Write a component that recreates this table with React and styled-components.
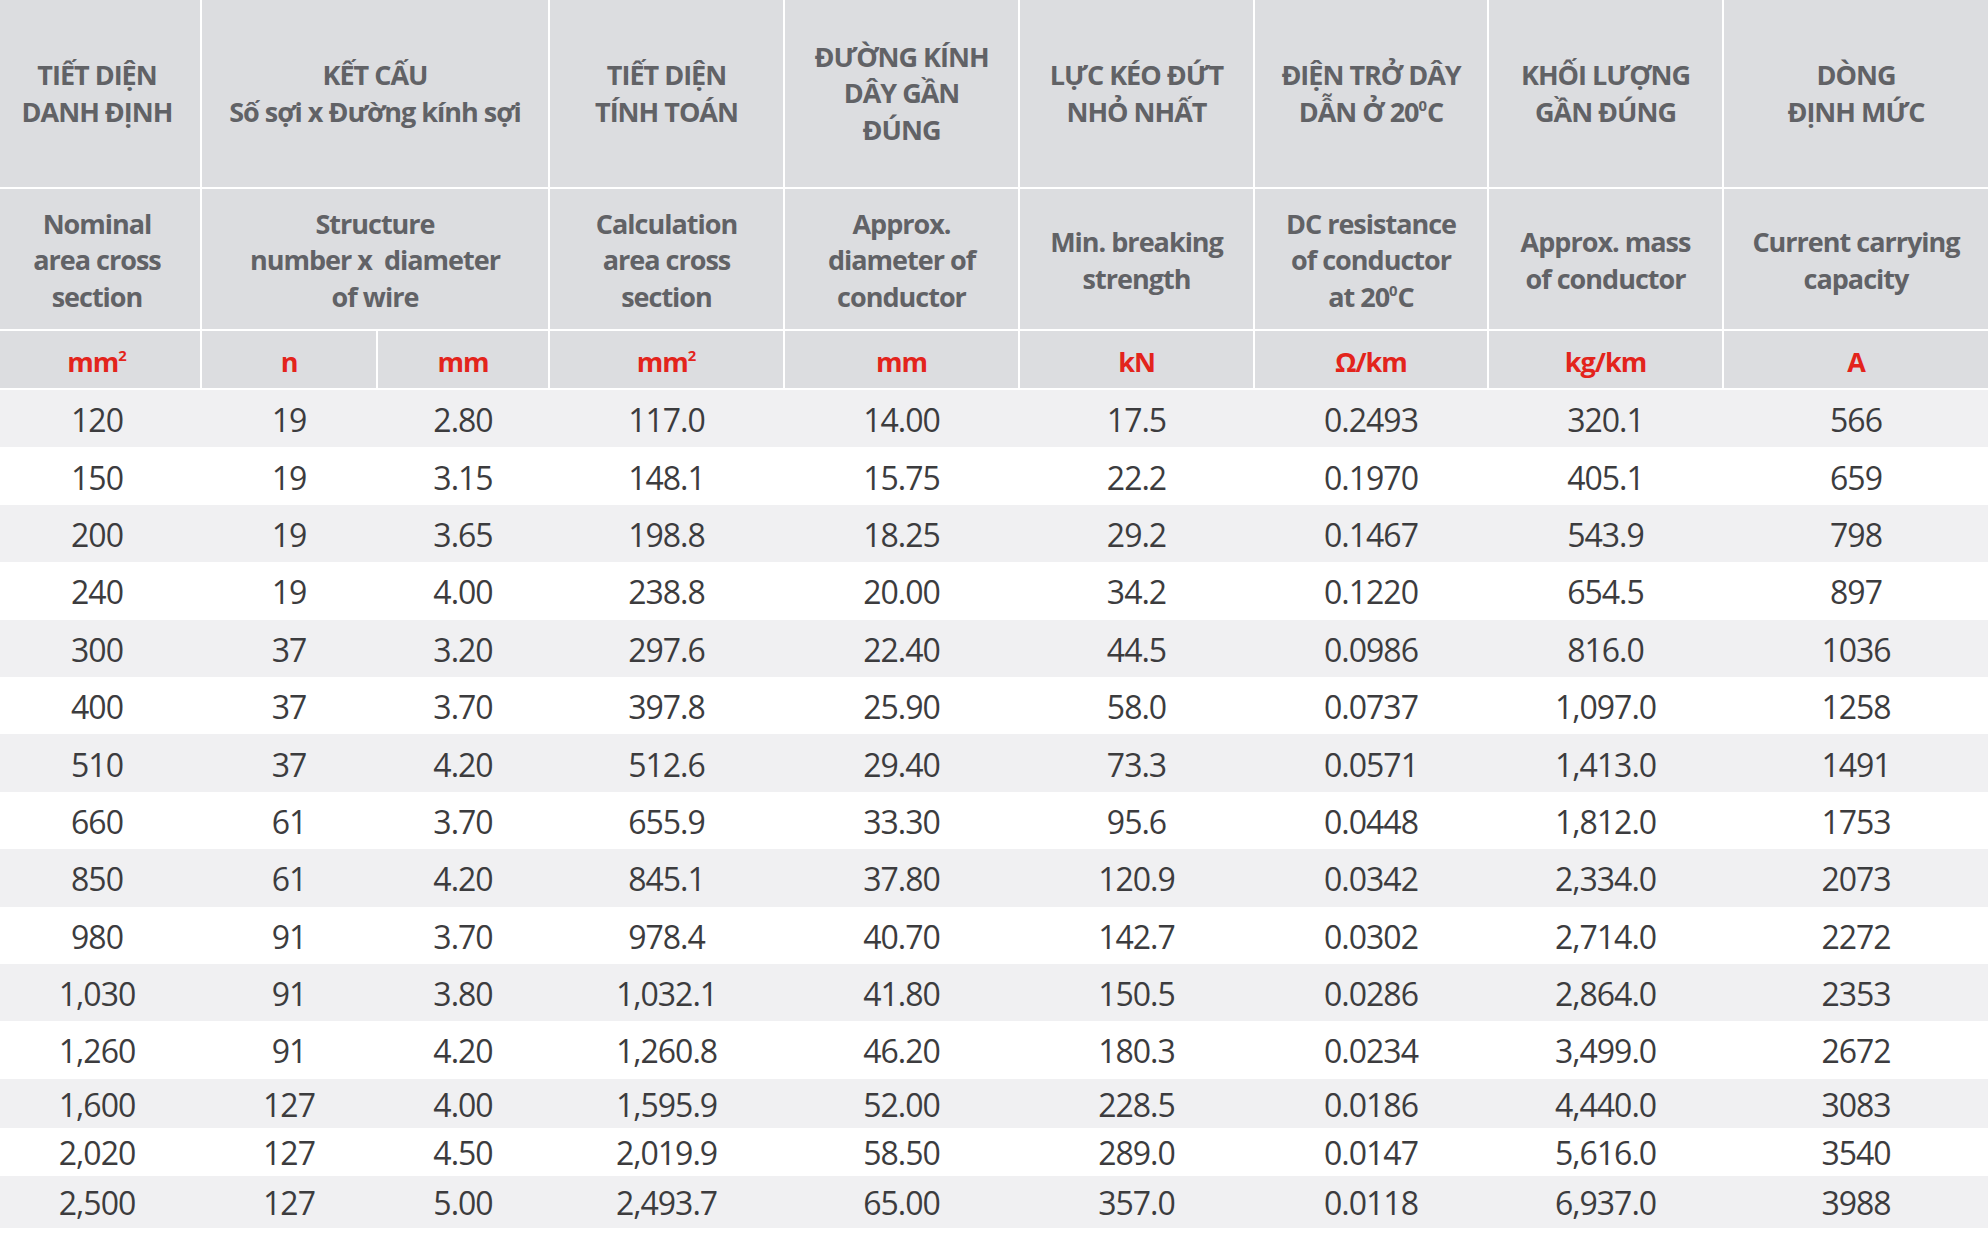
import React from "react";
import styled, { createGlobalStyle } from "styled-components";

const GlobalStyle = createGlobalStyle`
  html, body {
    margin: 0;
    padding: 0;
    background: #ffffff;
  }
  body {
    font-family: "Open Sans", "Noto Sans", sans-serif;
  }
`;

const COLS = "200px 174px 170px 233px 233px 233px 232px 233px 264px";

const Table = styled.div`
  width: 1988px;
  background: #ffffff;
`;

const Head = styled.div`
  display: grid;
  grid-template-columns: ${COLS};
  grid-template-rows: 187px 140px 57px;
  gap: 2px;
  padding-bottom: 2px;
  background: #ffffff;
`;

const HeadCell = styled.div`
  grid-column: ${(p) => p.$col};
  grid-row: ${(p) => p.$row};
  background: #dcdde0;
  display: flex;
  align-items: center;
  justify-content: center;
  text-align: center;
  font-weight: 700;
  font-size: 27px;
  line-height: 36.5px;
  letter-spacing: -1px;
  white-space: pre;
  color: ${(p) => (p.$unit ? "#e3241c" : "#616266")};
  padding-top: ${(p) => p.$top || 0}px;
  padding-right: ${(p) => (p.$first ? 6 : 0)}px;
`;

const Sup = styled.sup`
  font-size: 0.55em;
  line-height: 0;
  vertical-align: 0.75em;
  letter-spacing: 0;
`;

const Row = styled.div`
  display: grid;
  grid-template-columns: ${COLS};
  column-gap: 2px;
  align-items: center;
  height: ${(p) => p.$h}px;
  background: ${(p) => (p.$alt ? "#f0f0f2" : "#ffffff")};
`;

const Cell = styled.div`
  text-align: center;
  font-size: 32px;
  line-height: 1;
  letter-spacing: -1px;
  color: #3c3c3e;
  padding-top: 3px;
  padding-right: ${(p) => (p.$first ? 6 : 0)}px;
`;

const twenty = (
  <>
    20<Sup>0</Sup>C
  </>
);

const headTop = [
  { col: "1", content: <>TIẾT DIỆN<br />DANH ĐỊNH</> },
  { col: "2 / 4", content: <>KẾT CẤU<br />Số sợi x Đường kính sợi</> },
  { col: "4", content: <>TIẾT DIỆN<br />TÍNH TOÁN</> },
  { col: "5", content: <>ĐƯỜNG KÍNH<br />DÂY GẦN<br />ĐÚNG</> },
  { col: "6", content: <>LỰC KÉO ĐỨT<br />NHỎ NHẤT</> },
  { col: "7", content: <>ĐIỆN TRỞ DÂY<br />DẪN Ở {twenty}</> },
  { col: "8", content: <>KHỐI LƯỢNG<br />GẦN ĐÚNG</> },
  { col: "9", content: <>DÒNG<br />ĐỊNH MỨC</> },
];

const headMid = [
  { col: "1", content: <>Nominal<br />area cross<br />section</> },
  { col: "2 / 4", content: <>Structure<br />{"number x  diameter"}<br />of wire</> },
  { col: "4", content: <>Calculation<br />area cross<br />section</> },
  { col: "5", content: <>Approx.<br />diameter of<br />conductor</> },
  { col: "6", content: <>Min. breaking<br />strength</> },
  { col: "7", content: <>DC resistance<br />of conductor<br />at {twenty}</> },
  { col: "8", content: <>Approx. mass<br />of conductor</> },
  { col: "9", content: <>Current carrying<br />capacity</> },
];

const units = [
  <>mm<Sup>2</Sup></>,
  "n",
  "mm",
  <>mm<Sup>2</Sup></>,
  "mm",
  "kN",
  "Ω/km",
  "kg/km",
  "A",
];

const data = [
  ["120", "19", "2.80", "117.0", "14.00", "17.5", "0.2493", "320.1", "566"],
  ["150", "19", "3.15", "148.1", "15.75", "22.2", "0.1970", "405.1", "659"],
  ["200", "19", "3.65", "198.8", "18.25", "29.2", "0.1467", "543.9", "798"],
  ["240", "19", "4.00", "238.8", "20.00", "34.2", "0.1220", "654.5", "897"],
  ["300", "37", "3.20", "297.6", "22.40", "44.5", "0.0986", "816.0", "1036"],
  ["400", "37", "3.70", "397.8", "25.90", "58.0", "0.0737", "1,097.0", "1258"],
  ["510", "37", "4.20", "512.6", "29.40", "73.3", "0.0571", "1,413.0", "1491"],
  ["660", "61", "3.70", "655.9", "33.30", "95.6", "0.0448", "1,812.0", "1753"],
  ["850", "61", "4.20", "845.1", "37.80", "120.9", "0.0342", "2,334.0", "2073"],
  ["980", "91", "3.70", "978.4", "40.70", "142.7", "0.0302", "2,714.0", "2272"],
  ["1,030", "91", "3.80", "1,032.1", "41.80", "150.5", "0.0286", "2,864.0", "2353"],
  ["1,260", "91", "4.20", "1,260.8", "46.20", "180.3", "0.0234", "3,499.0", "2672"],
  ["1,600", "127", "4.00", "1,595.9", "52.00", "228.5", "0.0186", "4,440.0", "3083"],
  ["2,020", "127", "4.50", "2,019.9", "58.50", "289.0", "0.0147", "5,616.0", "3540"],
  ["2,500", "127", "5.00", "2,493.7", "65.00", "357.0", "0.0118", "6,937.0", "3988"],
];

const rowHeights = [57.4, 57.4, 57.4, 57.4, 57.4, 57.4, 57.4, 57.4, 57.4, 57.4, 57.4, 57.4, 49, 48, 52];

export default function App() {
  return (
    <>
      <GlobalStyle />
      <Table>
        <Head>
          {headTop.map((h, i) => (
            <HeadCell key={`t${i}`} $col={h.col} $row="1" $first={i === 0}>
              <div>{h.content}</div>
            </HeadCell>
          ))}
          {headMid.map((h, i) => (
            <HeadCell key={`m${i}`} $col={h.col} $row="2" $top={3} $first={i === 0}>
              <div>{h.content}</div>
            </HeadCell>
          ))}
          {units.map((u, i) => (
            <HeadCell key={`u${i}`} $col={String(i + 1)} $row="3" $unit $top={5} $first={i === 0}>
              <div>{u}</div>
            </HeadCell>
          ))}
        </Head>
        {data.map((r, i) => (
          <Row key={i} $h={rowHeights[i]} $alt={i % 2 === 0}>
            {r.map((v, j) => (
              <Cell key={j} $first={j === 0}>{v}</Cell>
            ))}
          </Row>
        ))}
      </Table>
    </>
  );
}
